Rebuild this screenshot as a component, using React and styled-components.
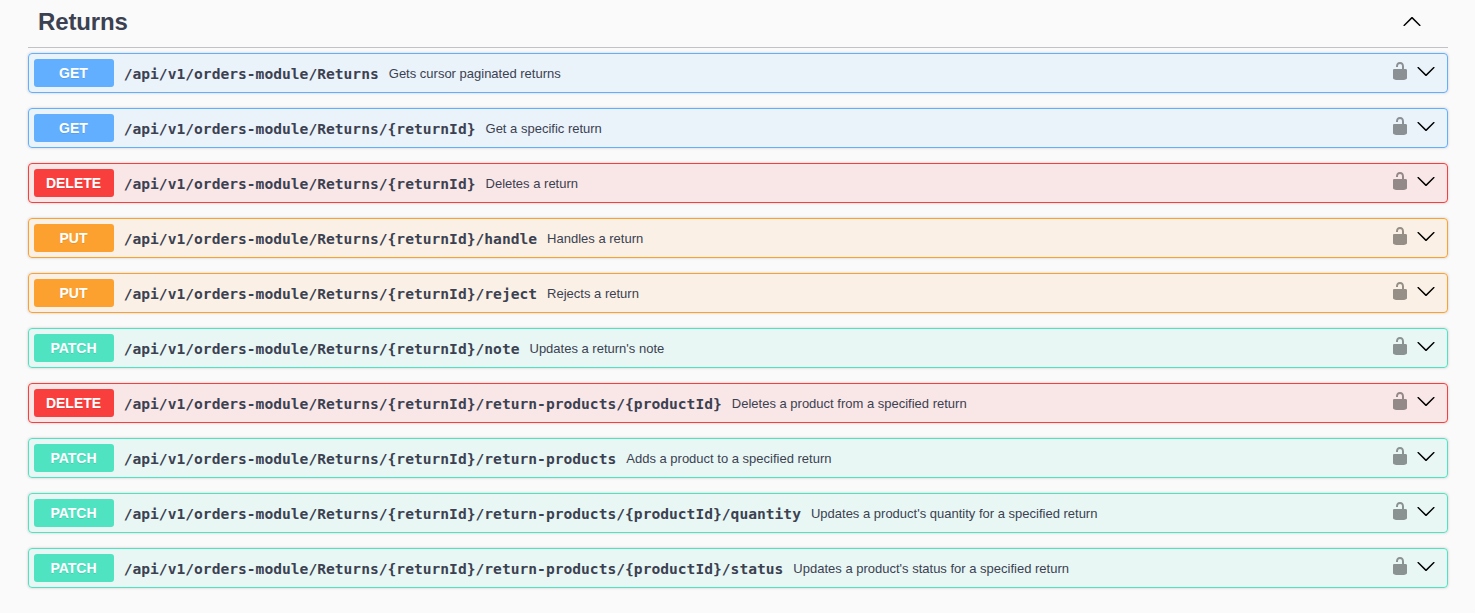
import React from 'react';
import styled, { createGlobalStyle } from 'styled-components';

const GlobalStyle = createGlobalStyle`
  *, *::before, *::after { box-sizing: border-box; }
  body {
    margin: 0;
    background: #fafafa;
    color: #3b4151;
    font-family: "Liberation Sans", Arial, sans-serif;
  }
`;

const methodColors = {
  GET: { solid: '#61affe', tint: 'rgba(97, 175, 254, 0.1)' },
  DELETE: { solid: '#f93e3e', tint: 'rgba(249, 62, 62, 0.1)' },
  PUT: { solid: '#fca130', tint: 'rgba(252, 161, 48, 0.1)' },
  PATCH: { solid: '#50e3c2', tint: 'rgba(80, 227, 194, 0.1)' },
};

const Section = styled.section`
  width: 1420px;
  height: 613px;
  margin-left: 28px;
`;

const SectionHeader = styled.header`
  display: flex;
  align-items: center;
  justify-content: space-between;
  height: 48px;
  padding: 0 26px 5px 10px;
  border-bottom: 1px solid rgba(59, 65, 81, 0.3);
`;

const Title = styled.h3`
  margin: 0;
  padding-top: 2px;
  font-size: 24px;
  line-height: 28px;
  font-weight: 700;
  letter-spacing: -0.12px;
`;

const Operations = styled.div`
  display: flex;
  flex-direction: column;
  gap: 15px;
  padding-top: 5px;
`;

const Operation = styled.div`
  display: flex;
  align-items: center;
  height: 40px;
  padding: 5px;
  border: 1px solid ${({ $method }) => methodColors[$method].solid};
  border-radius: 4px;
  background: ${({ $method }) => methodColors[$method].tint};
  box-shadow: 0 0 3px rgba(0, 0, 0, 0.19);
`;

const Method = styled.span`
  width: 80px;
  height: 28px;
  padding-right: 1px;
  border-radius: 3px;
  background: ${({ $method }) => methodColors[$method].solid};
  color: #fff;
  font-size: 14px;
  font-weight: 700;
  line-height: 28px;
  text-align: center;
  text-shadow: 0 1px 0 rgba(0, 0, 0, 0.1);
`;

const Path = styled.span`
  padding: 2px 10px 0 9.7px;
  font-family: "DejaVu Sans Mono", monospace;
  font-size: 14.61px;
  font-weight: 700;
  line-height: 20px;
  white-space: nowrap;
`;

const Description = styled.span`
  flex: 1;
  font-size: 13px;
  line-height: 16px;
  padding-top: 1px;
`;

const Actions = styled.div`
  display: flex;
  gap: 6px;
  padding: 0 6px 4px 0;
`;

const Icon = styled.svg`
  display: block;
  width: 20px;
  height: 20px;
  fill: #000;
  opacity: ${({ $faded }) => ($faded ? 0.4 : 1)};
`;

const ChevronUp = () => (
  <Icon viewBox="0 0 20 20">
    <path d="M 17.418 14.908 C 17.69 15.176 18.127 15.176 18.397 14.908 C 18.667 14.64 18.668 14.207 18.397 13.939 L 10.489 6.109 C 10.219 5.841 9.782 5.841 9.51 6.109 L 1.602 13.939 C 1.332 14.207 1.332 14.64 1.602 14.908 C 1.873 15.176 2.311 15.176 2.581 14.908 L 10 7.767 L 17.418 14.908 Z" />
  </Icon>
);

const ChevronDown = () => (
  <Icon viewBox="0 0 20 20">
    <path d="M17.418 6.109c.272-.268.709-.268.979 0s.271.701 0 .969l-7.908 7.83c-.27.268-.707.268-.979 0l-7.908-7.83c-.27-.268-.27-.701 0-.969.271-.268.709-.268.979 0L10 13.25l7.418-7.141z" />
  </Icon>
);

const Unlocked = () => (
  <Icon viewBox="0 0 20 20" $faded>
    <path d="M15.8 8H14V5.6C14 2.703 12.665 1 10 1 7.334 1 6 2.703 6 5.6V6h2v-.801C8 3.754 8.797 3 10 3c1.203 0 2 .754 2 2.199V8H4c-.553 0-1 .646-1 1.199V17c0 .549.428 1.139.951 1.307l1.197.387C5.672 18.861 6.55 19 7.1 19h5.8c.549 0 1.428-.139 1.951-.307l1.196-.387c.524-.167.953-.757.953-1.306V9.199C17 8.646 16.352 8 15.8 8z" />
  </Icon>
);

const base = '/api/v1/orders-module/Returns';

const operations = [
  ['GET', base, 'Gets cursor paginated returns'],
  ['GET', `${base}/{returnId}`, 'Get a specific return'],
  ['DELETE', `${base}/{returnId}`, 'Deletes a return'],
  ['PUT', `${base}/{returnId}/handle`, 'Handles a return'],
  ['PUT', `${base}/{returnId}/reject`, 'Rejects a return'],
  ['PATCH', `${base}/{returnId}/note`, "Updates a return's note"],
  ['DELETE', `${base}/{returnId}/return-products/{productId}`, 'Deletes a product from a specified return'],
  ['PATCH', `${base}/{returnId}/return-products`, 'Adds a product to a specified return'],
  ['PATCH', `${base}/{returnId}/return-products/{productId}/quantity`, "Updates a product's quantity for a specified return"],
  ['PATCH', `${base}/{returnId}/return-products/{productId}/status`, "Updates a product's status for a specified return"],
];

export default function App() {
  return (
    <>
      <GlobalStyle />
      <Section>
        <SectionHeader>
          <Title>Returns</Title>
          <ChevronUp />
        </SectionHeader>
        <Operations>
          {operations.map(([method, path, description]) => (
            <Operation key={method + path} $method={method}>
              <Method $method={method}>{method}</Method>
              <Path>{path}</Path>
              <Description>{description}</Description>
              <Actions>
                <Unlocked />
                <ChevronDown />
              </Actions>
            </Operation>
          ))}
        </Operations>
      </Section>
    </>
  );
}
